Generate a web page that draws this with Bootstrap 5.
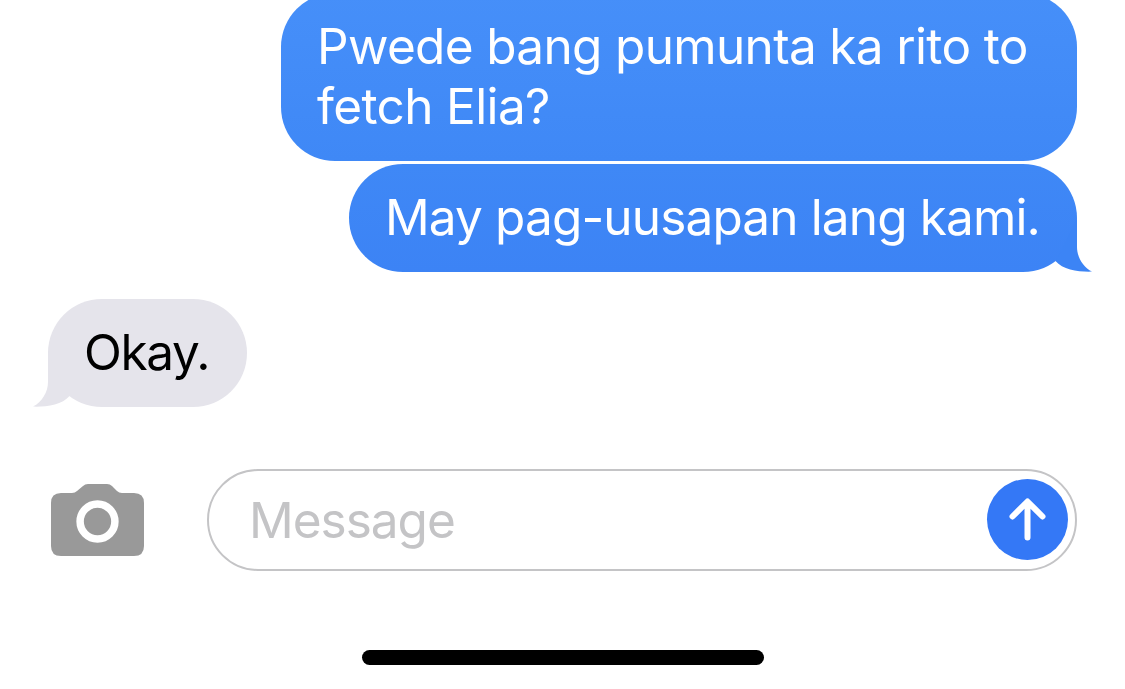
<!DOCTYPE html>
<html lang="tl">
<head>
<meta charset="utf-8">
<meta name="viewport" content="width=device-width, initial-scale=1">
<title>Messages</title>
<link rel="stylesheet" href="https://cdn.jsdelivr.net/npm/bootstrap@5.3.0/dist/css/bootstrap.min.css">
<style>
body{font-family:Inter,"Liberation Sans",sans-serif;font-size:49.5px;line-height:60px;color:#000}
.screen{height:689px}
.thread{padding:0 48px;height:407px}
.bubble{border-radius:54px;padding:23px 0 25px 36px;white-space:nowrap}
.sent{color:#fff}
.b1{width:796px;margin-top:-7px;background:linear-gradient(#468ff9,#3f88f6)}
.b2{width:728px;margin-top:3px;background:linear-gradient(#3f88f6,#3c83f5)}
.b3{width:199px;margin-top:27px;background:#e5e4eb}
.tail{width:54px;height:56px;bottom:0}
.tail-r{right:-15px}
.tail-l{left:-15px}
.l1{letter-spacing:-.66px}.l2{letter-spacing:-.64px}.l3{letter-spacing:-.86px}.l4{letter-spacing:-1.4px}.l5{letter-spacing:-1px}
.composer{margin-top:62px;padding:0 48px 0 50px}
.camera{width:95px;height:74px;margin-bottom:1px}
.field{width:870px;height:102px;border:2px solid #c4c4c6;padding:0 7px 0 40px}
.field input{font-size:49.5px;line-height:60px;height:60px;color:#000}
.field input::placeholder{color:#c4c4c6;opacity:1}
.send{width:81px;height:81px;margin-bottom:2px;background:#3478f6}
.home{width:402px;height:15px;margin-top:79px;background:#000}
</style>
</head>
<body class="bg-white">
<div class="screen d-flex flex-column overflow-hidden">
  <main class="thread d-flex flex-column flex-shrink-0">
    <div class="bubble sent b1 align-self-end"><span class="l1">Pwede bang pumunta ka rito to</span><br><span class="l2">fetch Elia?</span></div>
    <div class="bubble sent b2 align-self-end position-relative"><span class="l3">May pag-uusapan lang kami.</span>
      <svg class="tail tail-r position-absolute" viewBox="0 0 54 56" aria-hidden="true"><path fill="#3c84f5" d="M39 2V31C39 41 45 51 54 55.6C41 56 25 54 17.5 45L28 26Z"/></svg>
    </div>
    <div class="bubble b3 align-self-start position-relative"><span class="l4">Okay.</span>
      <svg class="tail tail-l position-absolute" viewBox="0 0 54 56" aria-hidden="true"><path fill="#e5e4eb" d="M15 1V31C15 41 9 51 0 55.6C13 56 29 54 36.5 45L26 26Z"/></svg>
    </div>
  </main>
  <form class="composer d-flex align-items-center justify-content-between flex-shrink-0">
    <button type="button" class="btn p-0 border-0 d-flex" aria-label="Camera">
      <svg class="camera" viewBox="0 0 95 74"><path fill="#999" d="M11 10H22Q25 10 27 8L33 3Q35 1 38 1H57Q60 1 62 3L67 8Q69 10 72 10H84Q94 10 94 20V63Q94 73 84 73H11Q1 73 1 63V20Q1 10 11 10Z"/><circle cx="47.5" cy="38.5" r="17.4" fill="none" stroke="#fff" stroke-width="7.5"/></svg>
    </button>
    <div class="field rounded-pill d-flex align-items-center">
      <input class="form-control border-0 p-0 bg-transparent shadow-none l5" type="text" placeholder="Message" aria-label="Message">
      <button type="button" class="send btn p-0 border-0 rounded-circle d-flex flex-shrink-0" aria-label="Send">
        <svg width="81" height="81" viewBox="0 0 81 81" fill="none" stroke="#fff" stroke-width="6" stroke-linecap="round" stroke-linejoin="round"><path d="M40.5 58.5V23M25.5 37.5L40.5 22.5L55.5 37.5"/></svg>
      </button>
    </div>
  </form>
  <div class="home rounded-pill mx-auto flex-shrink-0"></div>
</div>
<script src="https://cdn.jsdelivr.net/npm/bootstrap@5.3.0/dist/js/bootstrap.bundle.min.js"></script>
</body>
</html>
